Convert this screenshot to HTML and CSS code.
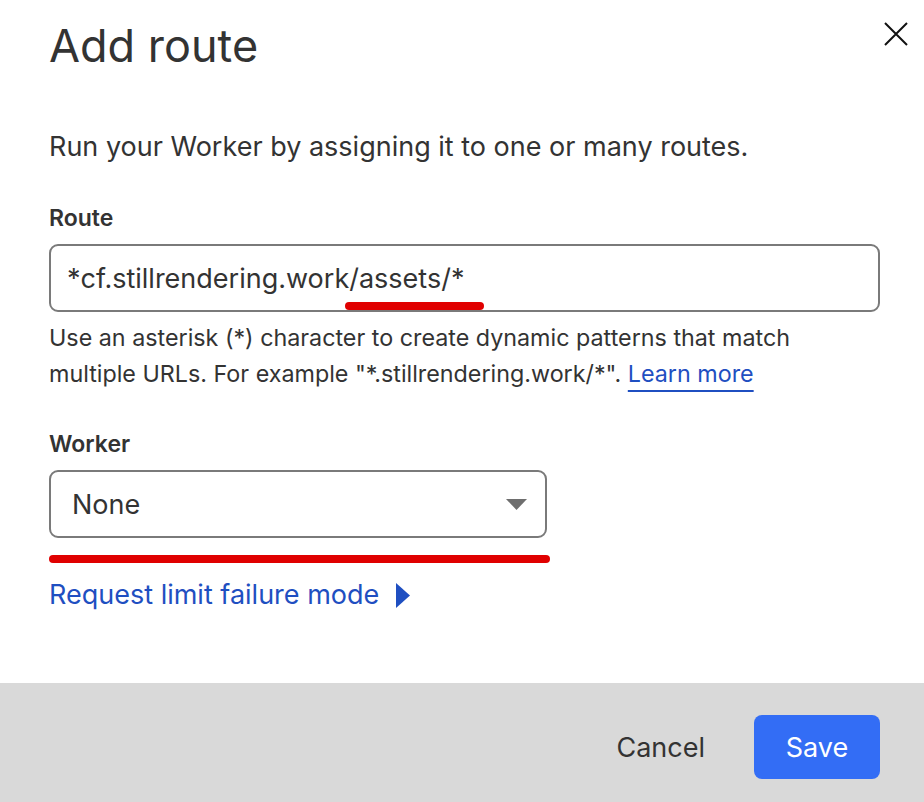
FILE: index.html
```html
<!DOCTYPE html>
<html lang="en">

<head>
    <meta charset="UTF-8" />
    <title>Add route</title>
    <link rel="stylesheet" href="styles.css">
</head>

<body>

    <div class="modal">
        <div class="modal-body">
            <div class="modal-header">
                <h1 class="title">Add route</h1>
                <button class="close" aria-label="Close">
                    <svg width="26" height="26" viewBox="0 0 26 26">
                        <path d="M2 2 L24 24 M24 2 L2 24" stroke="#111" stroke-width="2" fill="none" />
                    </svg>
                </button>
            </div>

            <p class="intro">Run your Worker by assigning it to one or many routes.</p>

            <div class="field">
                <label class="label">Route</label>
                <div class="input">*cf.stillrendering.work<span class="mark">/assets/*</span></div>
                <p class="help">Use an asterisk (*) character to create dynamic patterns that match multiple URLs. For example "*.stillrendering.work/*". <a href="#" class="link">Learn more</a></p>
            </div>

            <div class="field worker">
                <label class="label">Worker</label>
                <div class="select">
                    <span>None</span>
                    <svg width="21" height="11" viewBox="0 0 21 11">
                        <path d="M0 0 H21 L10.5 11 Z" fill="#6e6e6e" />
                    </svg>
                </div>
                <div class="red-line"></div>
            </div>

            <a href="#" class="toggle">Request limit failure mode
                <svg width="14" height="25" viewBox="0 0 14 25">
                    <path d="M0 0 L14 12.5 L0 25 Z" fill="#1f4fc1" />
                </svg>
            </a>
        </div>

        <div class="modal-footer">
            <button class="btn-cancel">Cancel</button>
            <button class="btn-save">Save</button>
        </div>
    </div>

</body>

</html>
```

FILE: styles.css
```css
* {
    box-sizing: border-box;
}

body {
    margin: 0;
    font-family: Inter, "Noto Sans", sans-serif;
    color: #333;
    background: #fff;
}

.modal {
    width: 924px;
    height: 802px;
    display: flex;
    flex-direction: column;
}

.modal-body {
    flex: 1;
    padding: 0 15px 0 49px;
}

.modal-header {
    display: flex;
    justify-content: space-between;
    align-items: flex-start;
}

.title {
    margin: 18px 0 0;
    font-size: 45px;
    line-height: 56px;
    font-weight: 400;
}

.close {
    margin-top: 21px;
    padding: 0;
    border: none;
    background: none;
    width: 26px;
    height: 26px;
}

.intro {
    margin: 57px 0 0;
    font-size: 27px;
    line-height: 32px;
}

.field {
    margin-top: 41px;
}

.label {
    display: block;
    font-size: 23px;
    font-weight: 600;
    line-height: 28px;
    margin-bottom: 12px;
}

.input {
    width: 831px;
    height: 68px;
    border: 2px solid #7a7a7a;
    border-radius: 9px;
    padding: 0 16px;
    display: flex;
    align-items: center;
    font-size: 27px;
    color: #333;
}

.mark {
    position: relative;
}

.mark::after {
    content: "";
    position: absolute;
    left: -4px;
    right: -20px;
    bottom: -15px;
    height: 8px;
    border-radius: 4px;
    background: #e00000;
}

.help {
    margin: 8px 0 0;
    font-size: 23.3px;
    line-height: 36px;
    max-width: 780px;
}

.link {
    color: #1f4fc1;
    text-decoration: underline;
    text-decoration-thickness: 2px;
    text-underline-offset: 8px;
}

.worker {
    margin-top: 38px;
}

.select {
    width: 498px;
    height: 68px;
    border: 2px solid #7a7a7a;
    border-radius: 9px;
    padding: 0 18px 0 21px;
    display: flex;
    align-items: center;
    justify-content: space-between;
    font-size: 27px;
}

.red-line {
    width: 501px;
    height: 8px;
    margin-top: 17px;
    border-radius: 4px;
    background: #e00000;
}

.toggle {
    display: inline-flex;
    align-items: center;
    gap: 17px;
    margin-top: 14px;
    font-size: 27px;
    line-height: 36px;
    color: #1f4fc1;
    text-decoration: none;
}

.modal-footer {
    height: 119px;
    background: #d9d9d9;
    display: flex;
    justify-content: flex-end;
    align-items: flex-start;
    gap: 49px;
    padding: 32px 44px 0 0;
}

.btn-cancel {
    height: 64px;
    border: none;
    background: none;
    font-family: Inter, sans-serif;
    font-size: 27px;
    color: #333;
    padding: 0;
}

.btn-save {
    width: 126px;
    height: 64px;
    border: none;
    border-radius: 8px;
    background: #336df5;
    color: #fff;
    font-family: Inter, sans-serif;
    font-size: 27px;
}
```
